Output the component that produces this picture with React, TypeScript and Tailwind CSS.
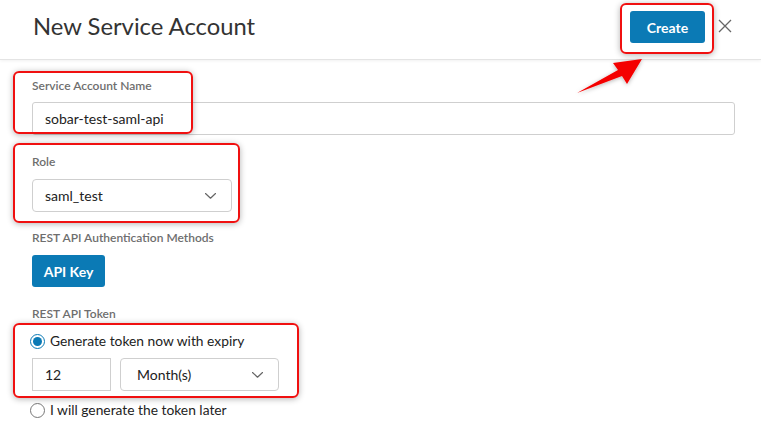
import React from "react";

const Chevron = () => (
  <svg width="11" height="6" viewBox="0 0 11 6" fill="none">
    <path d="M0.5 0.5 L5.5 5.2 L10.5 0.5" stroke="#666" strokeWidth="1.2" strokeLinecap="round" strokeLinejoin="round" />
  </svg>
);

export default function App() {
  return (
    <div className="relative w-[761px] h-[443px] overflow-hidden bg-white font-['Lato','Noto_Sans',sans-serif] text-[#333]">
      {/* Header */}
      <div className="h-[60px] flex items-start pt-[11px] pl-[33px] pr-[29px] border-b border-[#e4e4e4] shadow-[0_1px_3px_rgba(0,0,0,0.06)]">
        <h1 className="text-[23.8px] leading-[30px] font-normal text-[#333] flex-1">New Service Account</h1>
        <button className="w-[75px] h-[32px] rounded-[3px] bg-[#0b7ab5] text-white text-[14px] font-bold">Create</button>
        <button className="ml-[13px] mt-[8px] w-[14px] h-[14px] flex items-center justify-center">
          <svg width="14" height="14" viewBox="0 0 14 14">
            <path d="M1 1 L13 13 M13 1 L1 13" stroke="#666" strokeWidth="1.3" />
          </svg>
        </button>
      </div>

      {/* Body */}
      <div className="pl-[32px] pr-[26px] pt-[18px] flex flex-col">
        <label className="text-[12px] leading-[16px] font-semibold text-[#6e6e6e] mb-[8px]">Service Account Name</label>
        <div className="h-[33px] border border-[#cfcfcf] rounded-[3px] flex items-center pl-[12px] text-[14px] text-[#222]">
          sobar-test-saml-api
        </div>

        <label className="mt-[19px] text-[12px] leading-[16px] font-semibold text-[#6e6e6e] mb-[9px]">Role</label>
        <div className="w-[200px] h-[33px] border border-[#cfcfcf] rounded-[4px] flex items-center justify-between pl-[12px] pr-[15px] text-[14px] text-[#222]">
          <span>saml_test</span>
          <Chevron />
        </div>

        <label className="mt-[18px] text-[12px] leading-[16px] font-semibold text-[#6e6e6e] mb-[9px]">REST API Authentication Methods</label>
        <div>
          <button className="w-[73px] h-[32px] rounded-[3px] bg-[#0b7ab5] text-white text-[14px] font-bold">API Key</button>
        </div>

        <label className="mt-[19px] text-[12px] leading-[16px] font-semibold text-[#6e6e6e] mb-[9px]">REST API Token</label>
        <div className="flex items-center h-[20px] -ml-[2px]">
          <span className="w-[15px] h-[15px] rounded-full border border-[#0b7ab5] flex items-center justify-center">
            <span className="w-[9px] h-[9px] rounded-full bg-[#0b7ab5]" />
          </span>
          <span className="ml-[5px] text-[13.8px] text-[#222]">Generate token now with expiry</span>
        </div>
        <div className="flex mt-[7px] gap-[9px]">
          <div className="w-[79px] h-[33px] border border-[#cfcfcf] flex items-center pl-[12px] text-[14px] text-[#222]">12</div>
          <div className="w-[159px] h-[33px] border border-[#cfcfcf] rounded-[4px] flex items-center justify-between pl-[16px] pr-[15px] text-[14px] text-[#222]">
            <span>Month(s)</span>
            <Chevron />
          </div>
        </div>
        <div className="flex items-center h-[20px] mt-[9px] -ml-[2px]">
          <span className="w-[15px] h-[15px] rounded-full border border-[#777]" />
          <span className="ml-[5px] text-[13.8px] text-[#222]">I will generate the token later</span>
        </div>
      </div>

      {/* Annotations */}
      <div className="absolute left-[13px] top-[71px] w-[180px] h-[63px] border-2 border-[#f01010] rounded-[6px] shadow-[0_1px_6px_rgba(0,0,0,0.3)] pointer-events-none" />
      <div className="absolute left-[13px] top-[143px] w-[227px] h-[80px] border-2 border-[#f01010] rounded-[6px] shadow-[0_1px_6px_rgba(0,0,0,0.3)] pointer-events-none" />
      <div className="absolute left-[13px] top-[323px] w-[286px] h-[75px] border-2 border-[#f01010] rounded-[6px] shadow-[0_1px_6px_rgba(0,0,0,0.3)] pointer-events-none" />
      <div className="absolute left-[620px] top-[3px] w-[94px] h-[51px] border-2 border-[#f01010] rounded-[6px] shadow-[0_1px_6px_rgba(0,0,0,0.3)] pointer-events-none" />
      <svg className="absolute left-0 top-0 pointer-events-none" width="761" height="443">
        <defs>
          <filter id="sh" x="-20%" y="-20%" width="140%" height="140%">
            <feDropShadow dx="0" dy="1" stdDeviation="2" floodColor="#000" floodOpacity="0.3" />
          </filter>
        </defs>
        <polygon points="577,93 618,70 613,63 642,59 627,84 622,76" fill="#f40000" filter="url(#sh)" />
      </svg>
    </div>
  );
}
